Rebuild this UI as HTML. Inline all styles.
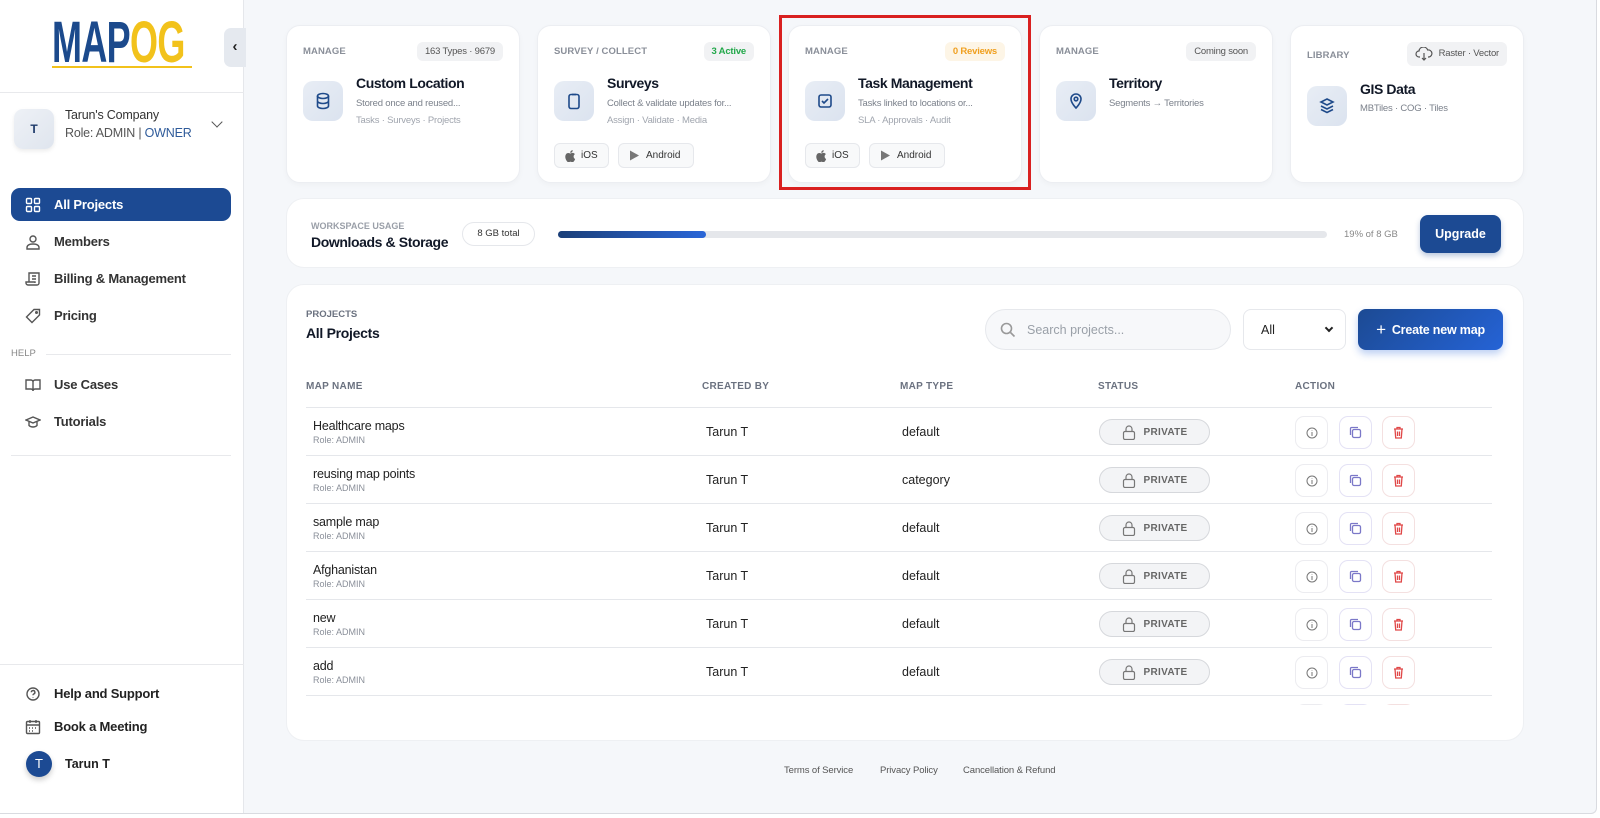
<!DOCTYPE html>
<html><head><meta charset="utf-8"><style>
*{box-sizing:border-box;margin:0;padding:0}
body{width:1600px;height:818px;background:#fff;font-family:"Liberation Sans",Arial,sans-serif;color:#1f2937;position:relative;overflow:hidden}
.abs{position:absolute}
#frame{position:absolute;left:0;top:0;width:1597px;height:814px;background:#f5f7fa;border-right:1px solid #d9dbe0;border-bottom:1px solid #d9dbe0;border-bottom-right-radius:6px;overflow:hidden}
#side{position:absolute;left:0;top:0;width:244px;height:814px;background:#fff;border-right:1px solid #e5e7eb}
.nav{position:absolute;left:11px;width:220px;height:33px;display:flex;align-items:center;font-size:13px;font-weight:bold;color:#333;padding-left:14px;letter-spacing:-.2px}
.nav svg{width:16px;height:16px;margin-right:13px;fill:none;stroke:#555;stroke-width:1.4}
.card{position:absolute;top:25px;width:234px;height:158px;background:#fff;border:1px solid #eceef2;border-radius:14px;box-shadow:0 2px 6px rgba(0,0,0,.03)}
.lbl{position:absolute;left:16px;top:20px;font-size:9.5px;font-weight:bold;color:#8a8f99;letter-spacing:.1px}
.pill{position:absolute;top:16px;right:16px;height:19px;padding:0 8px;border-radius:6px;background:#f1f2f4;font-size:9.5px;color:#555;line-height:19px;letter-spacing:-.2px}
.ico{position:absolute;left:16px;top:55px;width:40px;height:40px;border-radius:10px;background:linear-gradient(135deg,#e8edf5,#dbe3ef);display:flex;align-items:center;justify-content:center}
.ico svg{width:18px;height:18px;fill:none;stroke:#1e4a8a;stroke-width:1.6}
.ttl{position:absolute;left:69px;top:49px;font-size:14px;font-weight:bold;color:#111827;letter-spacing:-.4px}
.d1{position:absolute;left:69px;top:72px;font-size:9.5px;color:#7b818b;letter-spacing:-.2px}
.d2{position:absolute;left:69px;top:89px;font-size:9.5px;color:#a0a5ae;letter-spacing:-.2px}
.btn{position:absolute;top:117px;height:25px;border:1px solid #e6e8ec;border-radius:6px;background:#f8f9fa;font-size:10px;color:#333;display:flex;align-items:center;padding:0 10px}
.th{position:absolute;top:381px;font-size:10px;font-weight:bold;color:#6b7280;letter-spacing:.3px}
.row{position:absolute;left:306px;width:1186px;height:48px;border-top:1px solid #e5e7eb}
.nm{position:absolute;left:7px;top:11px;font-size:12.5px;color:#222;letter-spacing:-.2px}
.rl{position:absolute;left:7px;top:27px;font-size:9px;color:#8a8f99}
.cb{position:absolute;left:400px;top:17px;font-size:12.5px;color:#222}
.mt{position:absolute;left:596px;top:17px;font-size:12.5px;color:#222}
.pv{position:absolute;left:793px;top:11px;width:111px;height:26px;border:1px solid #d6d8dc;border-radius:13px;background:#f3f4f6;font-size:10px;font-weight:bold;color:#666;display:flex;align-items:center;justify-content:center;letter-spacing:.3px}
.ab{position:absolute;top:8px;width:33px;height:33px;border-radius:9px;background:#fff;border:1px solid #ececf0;display:flex;align-items:center;justify-content:center}
.ft{position:absolute;top:765px;font-size:9.5px;color:#555;letter-spacing:-.1px}
</style></head><body>
<div id="frame">
<div id="side">
  <div class="abs" style="left:52px;top:15px;width:140px;height:56px">
    <div style="font-weight:bold;font-size:58px;letter-spacing:-1px;line-height:56px;color:#1c4a8c;transform:scaleX(.62);transform-origin:left;white-space:nowrap"><span>MAP</span><span style="color:#f2c21b">OG</span></div>
    <div class="abs" style="left:0;top:51px;width:140px;height:2px;background:#f2c21b"></div>
  </div>
  <div class="abs" style="left:224px;top:28px;width:22px;height:39px;background:#e5e9ef;border-radius:7px 0 0 7px;font-size:15px;font-weight:bold;text-align:center;line-height:37px;color:#222">&lsaquo;</div>
  <div class="abs" style="left:0;top:92px;width:244px;height:1px;background:#e8e9ec"></div>
  <div class="abs" style="left:14px;top:109px;width:40px;height:40px;border-radius:9px;background:linear-gradient(135deg,#eef1f6,#dfe5ee);box-shadow:0 2px 4px rgba(0,0,0,.08);font-size:12px;font-weight:bold;color:#1e3a6a;text-align:center;line-height:40px">T</div>
  <div class="abs" style="left:65px;top:108px;font-size:12.5px;color:#333;letter-spacing:-.2px">Tarun's Company</div>
  <div class="abs" style="left:65px;top:126px;font-size:12.5px;color:#555;letter-spacing:-.2px">Role: ADMIN | <span style="color:#2f5b9a">OWNER</span></div>
  <div class="abs" style="left:213px;top:118px;width:8px;height:8px;border-right:1.5px solid #555;border-bottom:1.5px solid #555;transform:rotate(45deg)"></div>
  <div class="nav" style="top:188px;background:#1c4a93;color:#fff;border-radius:9px"><svg viewBox="0 0 16 16" style="stroke:#fff"><rect x="1.5" y="1.5" width="5" height="5" rx="1"/><rect x="9.5" y="1.5" width="5" height="5" rx="1"/><rect x="1.5" y="9.5" width="5" height="5" rx="1"/><rect x="9.5" y="9.5" width="5" height="5" rx="1"/></svg>All Projects</div>
  <div class="nav" style="top:225px"><svg viewBox="0 0 16 16"><circle cx="8" cy="5" r="3"/><path d="M2 15v-1.5c0-2 2-3.5 6-3.5s6 1.5 6 3.5V15z"/></svg>Members</div>
  <div class="nav" style="top:262px"><svg viewBox="0 0 16 16"><path d="M4 11V2h10v10a2 2 0 0 1-2 2H3a2 2 0 0 1-2-2v-1h9v1M7 5h4M7 8h4"/></svg>Billing &amp; Management</div>
  <div class="nav" style="top:299px"><svg viewBox="0 0 16 16"><path d="M9 1.5h5.5V7L7 14.5 1.5 9z"/><circle cx="11.5" cy="4.5" r=".8"/></svg>Pricing</div>
  <div class="abs" style="left:11px;top:348px;font-size:9.5px;color:#888">HELP</div>
  <div class="abs" style="left:46px;top:354px;width:185px;height:1px;background:#e8e9ec"></div>
  <div class="nav" style="top:368px"><svg viewBox="0 0 16 16"><path d="M1 3h5a2 2 0 0 1 2 2v9a2 2 0 0 0-2-2H1zM15 3h-5a2 2 0 0 0-2 2v9a2 2 0 0 1 2-2h5z"/></svg>Use Cases</div>
  <div class="nav" style="top:405px"><svg viewBox="0 0 16 16"><path d="M1 6l7-3 7 3-7 3zM4 7.5v4c2 2 6 2 8 0v-4"/></svg>Tutorials</div>
  <div class="abs" style="left:11px;top:455px;width:220px;height:1px;background:#e8e9ec"></div>
  <div class="abs" style="left:0;top:664px;width:244px;height:1px;background:#e8e9ec"></div>
  <div class="nav" style="top:677px;color:#222"><svg viewBox="0 0 16 16"><circle cx="8" cy="8" r="6"/><path d="M6.3 6.3a1.8 1.8 0 1 1 2.4 1.7c-.5.2-.7.6-.7 1.2M8 11v.5"/></svg>Help and Support</div>
  <div class="nav" style="top:710px;color:#222"><svg viewBox="0 0 16 16"><rect x="1.5" y="2.5" width="13" height="12" rx="1"/><path d="M1.5 6h13M5 1v3M11 1v3M4 9h1M7 9h1M10 9h1M4 12h1M7 12h1"/></svg>Book a Meeting</div>
  <div class="abs" style="left:26px;top:751px;width:26px;height:26px;border-radius:50%;background:#1c4a93;color:#fff;font-size:13px;text-align:center;line-height:26px;box-shadow:0 3px 6px rgba(0,0,0,.2)">T</div>
  <div class="abs" style="left:65px;top:757px;font-size:12.5px;color:#222;font-weight:bold">Tarun T</div>
</div>

<div class="card" style="left:286px"><div class="lbl">MANAGE</div><div class="pill">163 Types · 9679</div>
<div class="ico"><svg viewBox="0 0 18 18"><ellipse cx="9" cy="4" rx="5.5" ry="2.5"/><path d="M3.5 4v10c0 1.4 2.5 2.5 5.5 2.5s5.5-1.1 5.5-2.5V4M3.5 9c0 1.4 2.5 2.5 5.5 2.5s5.5-1.1 5.5-2.5"/></svg></div>
<div class="ttl">Custom Location</div><div class="d1">Stored once and reused...</div><div class="d2">Tasks · Surveys · Projects</div></div>

<div class="card" style="left:537px"><div class="lbl">SURVEY / COLLECT</div><div class="pill" style="color:#22a84a;font-weight:bold">3 Active</div>
<div class="ico"><svg viewBox="0 0 18 18"><rect x="4" y="2.5" width="10" height="14" rx="2"/><path d="M7 2.5h4"/></svg></div>
<div class="ttl">Surveys</div><div class="d1">Collect &amp; validate updates for...</div><div class="d2">Assign · Validate · Media</div>
<div class="btn" style="left:16px;width:55px"><svg width="11" height="12" viewBox="0 0 11 12"><path fill="#666" d="M8.6 6.4c0-1.5 1.2-2.2 1.3-2.3-.7-1-1.8-1.2-2.2-1.2-.9-.1-1.8.6-2.3.6s-1.2-.5-2-.5C2.3 3 1.3 3.6.8 4.6c-1.1 1.9-.3 4.6.8 6.1.5.7 1.1 1.6 1.9 1.5.8 0 1-.5 2-.5s1.2.5 2 .5 1.3-.8 1.8-1.5c.6-.8.8-1.6.8-1.7 0 0-1.5-.6-1.5-2.6zM7.1 2c.4-.5.7-1.2.6-1.9-.6 0-1.3.4-1.8.9-.4.4-.7 1.1-.6 1.8.7.1 1.4-.3 1.8-.8z"/></svg><span style="margin-left:5px">iOS</span></div>
<div class="btn" style="left:80px;width:76px"><svg width="11" height="11" viewBox="0 0 11 11" style="margin-right:6px"><path fill="#777" d="M1 0.5l9 5-9 5z"/></svg>Android</div></div>

<div class="card" style="left:788px"><div class="lbl">MANAGE</div><div class="pill" style="color:#f0a020;background:#fdf5e6;font-weight:bold">0 Reviews</div>
<div class="ico"><svg viewBox="0 0 18 18"><rect x="3" y="3" width="12" height="12" rx="2"/><path d="M6 9l2 2 4-4"/></svg></div>
<div class="ttl">Task Management</div><div class="d1">Tasks linked to locations or...</div><div class="d2">SLA · Approvals · Audit</div>
<div class="btn" style="left:16px;width:55px"><svg width="11" height="12" viewBox="0 0 11 12"><path fill="#666" d="M8.6 6.4c0-1.5 1.2-2.2 1.3-2.3-.7-1-1.8-1.2-2.2-1.2-.9-.1-1.8.6-2.3.6s-1.2-.5-2-.5C2.3 3 1.3 3.6.8 4.6c-1.1 1.9-.3 4.6.8 6.1.5.7 1.1 1.6 1.9 1.5.8 0 1-.5 2-.5s1.2.5 2 .5 1.3-.8 1.8-1.5c.6-.8.8-1.6.8-1.7 0 0-1.5-.6-1.5-2.6zM7.1 2c.4-.5.7-1.2.6-1.9-.6 0-1.3.4-1.8.9-.4.4-.7 1.1-.6 1.8.7.1 1.4-.3 1.8-.8z"/></svg><span style="margin-left:5px">iOS</span></div>
<div class="btn" style="left:80px;width:76px"><svg width="11" height="11" viewBox="0 0 11 11" style="margin-right:6px"><path fill="#777" d="M1 0.5l9 5-9 5z"/></svg>Android</div></div>
<div class="abs" style="left:779px;top:15px;width:252px;height:175px;border:3px solid #d92020"></div>

<div class="card" style="left:1039px"><div class="lbl">MANAGE</div><div class="pill">Coming soon</div>
<div class="ico"><svg viewBox="0 0 18 18"><path d="M9 16s5-5 5-9a5 5 0 0 0-10 0c0 4 5 9 5 9z"/><circle cx="9" cy="7" r="1.8"/></svg></div>
<div class="ttl">Territory</div><div class="d1">Segments → Territories</div></div>

<div class="card" style="left:1290px"><div class="lbl" style="top:24px">LIBRARY</div><div class="pill" style="height:24px;line-height:24px;top:16px;display:flex;align-items:center"><svg width="18" height="14" viewBox="0 0 18 14" fill="none" stroke="#555" stroke-width="1.2" style="margin-right:6px"><path d="M5 10H4a3 3 0 0 1 0-6 4.5 4.5 0 0 1 8.7-1A3.5 3.5 0 0 1 14 10h-1M9 6v7M7 11l2 2 2-2"/></svg>Raster · Vector</div>
<div class="ico" style="top:60px"><svg viewBox="0 0 18 18"><path d="M9 2l6 3-6 3-6-3zM3 9l6 3 6-3M3 12.5l6 3 6-3"/></svg></div>
<div class="ttl" style="top:55px">GIS Data</div><div class="d1" style="top:77px">MBTiles · COG · Tiles</div></div>

<div class="abs" style="left:286px;top:198px;width:1238px;height:70px;background:#fff;border-radius:18px;border:1px solid #eef0f3">
  <div class="abs" style="left:24px;top:22px;font-size:9px;font-weight:bold;color:#9a9fa8">WORKSPACE USAGE</div>
  <div class="abs" style="left:24px;top:35px;font-size:14px;font-weight:bold;color:#111827;letter-spacing:-.4px">Downloads &amp; Storage</div>
  <div class="abs" style="left:175px;top:23px;width:73px;height:24px;border:1px solid #e5e7eb;border-radius:12px;font-size:9.5px;text-align:center;line-height:22px;color:#333">8 GB total</div>
  <div class="abs" style="left:271px;top:32px;width:769px;height:7px;border-radius:4px;background:#e5e7eb"><div style="width:148px;height:7px;border-radius:4px;background:linear-gradient(90deg,#1b3f78,#2a66d8)"></div></div>
  <div class="abs" style="left:1057px;top:30px;font-size:9.5px;color:#888">19% of 8 GB</div>
  <div class="abs" style="left:1133px;top:16px;width:81px;height:38px;border-radius:8px;background:#1c4a93;color:#fff;font-size:12.5px;font-weight:bold;text-align:center;line-height:38px;box-shadow:0 3px 6px rgba(28,74,147,.3)">Upgrade</div>
</div>

<div class="abs" style="left:286px;top:284px;width:1238px;height:457px;background:#fff;border-radius:18px;border:1px solid #eef0f3;overflow:hidden"></div>
<div class="abs" style="left:306px;top:309px;font-size:9.5px;font-weight:bold;color:#6b7280">PROJECTS</div>
<div class="abs" style="left:306px;top:325px;font-size:14px;font-weight:bold;color:#111827;letter-spacing:-.3px">All Projects</div>
<div class="abs" style="left:985px;top:309px;width:246px;height:41px;border-radius:21px;background:#f7f8fa;border:1px solid #e6e8ec"><svg class="abs" style="left:14px;top:12px" width="16" height="16" viewBox="0 0 16 16" fill="none" stroke="#999" stroke-width="1.6"><circle cx="6.5" cy="6.5" r="5"/><path d="M10.5 10.5l4 4"/></svg><div class="abs" style="left:41px;top:13px;font-size:12.5px;color:#9aa0a8">Search projects...</div></div>
<div class="abs" style="left:1243px;top:309px;width:103px;height:41px;border-radius:8px;background:#fff;border:1px solid #e6e8ec"><div class="abs" style="left:17px;top:13px;font-size:12.5px;color:#222">All</div><div class="abs" style="left:82px;top:15px;width:6px;height:6px;border-right:2px solid #222;border-bottom:2px solid #222;transform:rotate(45deg)"></div></div>
<div class="abs" style="left:1358px;top:309px;width:145px;height:41px;border-radius:8px;background:linear-gradient(135deg,#1c4a93,#2563d6);color:#fff;font-size:12.5px;font-weight:bold;line-height:41px;text-align:center;box-shadow:0 4px 8px rgba(37,99,214,.3);letter-spacing:-.2px"><span style="font-weight:normal;font-size:17px;vertical-align:-1px;margin-right:6px">+</span>Create new map</div>

<div class="th" style="left:306px">MAP NAME</div>
<div class="th" style="left:702px">CREATED BY</div>
<div class="th" style="left:900px">MAP TYPE</div>
<div class="th" style="left:1098px">STATUS</div>
<div class="th" style="left:1295px">ACTION</div>

<div class="abs" style="left:0;top:407px;width:1600px;height:298px;overflow:hidden">
<div id="rows" style="position:relative;top:-407px"></div></div>
<div class="ft" style="left:784px">Terms of Service</div>
<div class="ft" style="left:880px">Privacy Policy</div>
<div class="ft" style="left:963px">Cancellation &amp; Refund</div>
</div>
<script>
var rows=[["Healthcare maps","default"],["reusing map points","category"],["sample map","default"],["Afghanistan","default"],["new","default"],["add","default"],["",""]];
var h="";
rows.forEach(function(r,i){var t=407+i*48;
h+='<div class="row" style="top:'+t+'px">'+(r[0]?'<div class="nm">'+r[0]+'</div><div class="rl">Role: ADMIN</div><div class="cb">Tarun T</div><div class="mt">'+r[1]+'</div><div class="pv"><svg width="14" height="15" viewBox="0 0 14 15" fill="none" stroke="#777" stroke-width="1.2" style="margin-right:8px"><rect x="1.5" y="6.5" width="11" height="8" rx="1.5"/><path d="M4 6.5V4a3 3 0 0 1 6 0v2.5"/></svg>PRIVATE</div>':'')+
'<div class="ab" style="left:989px"><svg width="12" height="12" viewBox="0 0 12 12" fill="none" stroke="#777" stroke-width="1"><circle cx="6" cy="6" r="5"/><path d="M6 5v4M6 3v.5"/></svg></div>'+
'<div class="ab" style="left:1033px;border-color:#e4e2f5"><svg width="13" height="13" viewBox="0 0 13 13" fill="none" stroke="#7b78c8" stroke-width="1.3"><rect x="3.5" y="3.5" width="8" height="8" rx="1.5"/><path d="M1.5 9V2.5a1 1 0 0 1 1-1H9"/></svg></div>'+
'<div class="ab" style="left:1076px;border-color:#f4e0e0"><svg width="11" height="13" viewBox="0 0 11 13" fill="none" stroke="#e04848" stroke-width="1.3"><path d="M1 3h9M4 3V1.5h3V3M2 3l.7 9h5.6L9 3M4.5 5.5v4.5M6.5 5.5v4.5"/></svg></div></div>';});
document.getElementById('rows').innerHTML=h;
</script>
</body></html>
